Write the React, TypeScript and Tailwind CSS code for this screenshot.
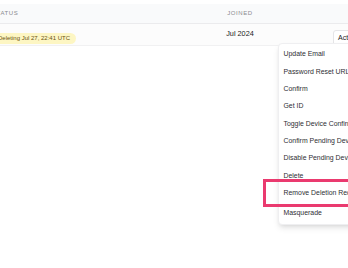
const menuItems = [
  "Update Email",
  "Password Reset URL",
  "Confirm",
  "Get ID",
  "Toggle Device Confirmation",
  "Confirm Pending Devices",
  "Disable Pending Devices",
  "Delete",
  "Remove Deletion Request",
]

const App = () => {
  return (
    <div className="relative w-[348px] h-[268px] overflow-hidden bg-white font-['Liberation_Sans',Arial,sans-serif]">
      <div className="h-[4px]" />

      {/* table head */}
      <div className="flex h-[20px] ml-[-8px] w-[400px] items-center bg-[#f9fafb] border-b border-[#ebebed] text-[6px] uppercase tracking-[0.1em] text-[#8a8a90]">
        <div className="w-[208px]">Status</div>
        <div className="w-[80px] text-center">Joined</div>
        <div className="flex-1" />
      </div>

      {/* row */}
      <div className="flex h-[22px] ml-[-8px] w-[400px] items-center bg-[#fcfcfc] border-b border-[#f1f1f2]">
        <div className="w-[208px]">
          <span className="ml-[1px] inline-flex h-[11px] items-center rounded-full bg-[#fdf6c3] pl-[5px] pr-[6px] text-[6px] font-medium text-[#6b5310]">
            Deleting Jul 27, 22:41 UTC
          </span>
        </div>
        <div className="w-[80px] text-center text-[7.3px] text-[#222]">Jul 2024</div>
        <div className="flex-1 pl-[53px]">
          <button className="h-[16px] rounded-[3px] border border-[#e5e5e7] bg-white px-[4px] text-[7px] font-medium text-[#222]">
            Actions
          </button>
        </div>
      </div>

      {/* dropdown */}
      <div className="absolute left-[278px] top-[43px] w-[110px] rounded-[4px] border border-[#efeff1] bg-white py-[2px] shadow-md">
        {menuItems.map((item) => (
          <div key={item} className="flex h-[17.3px] items-center whitespace-nowrap pl-[4.5px] text-[6.9px] font-medium text-[#2e2e33]">
            {item}
          </div>
        ))}
        <div className="h-[2.7px]" />
        <div className="flex h-[17.3px] items-center pl-[4.5px] text-[6.9px] font-medium text-[#2e2e33]">Masquerade</div>
      </div>

      {/* annotation */}
      <div className="absolute left-[263px] top-[179px] h-[28px] w-[110px] border-[3px] border-[#ea3a6f]" />
    </div>
  )
}

export default App
